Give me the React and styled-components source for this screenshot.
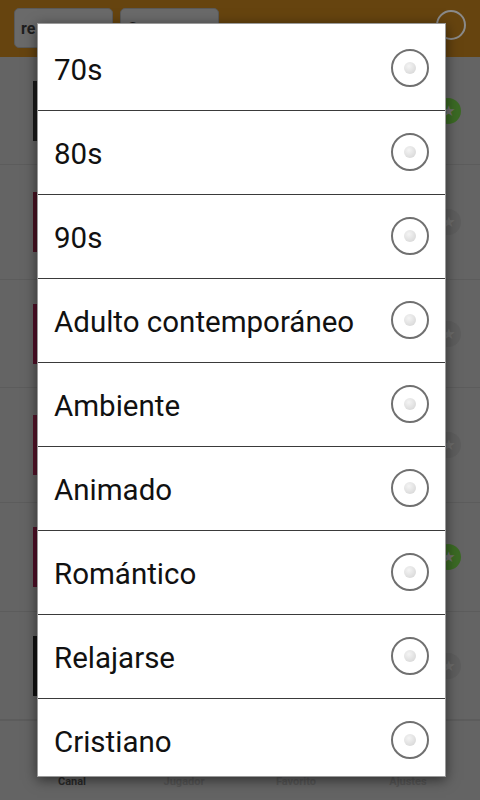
import React, { useState } from 'react';
import styled, { createGlobalStyle } from 'styled-components';

// The page behind the dialog is drawn with colours already dimmed by the modal scrim.
const GlobalStyle = createGlobalStyle`
  html, body {
    margin: 0;
    padding: 0;
    height: 100%;
    overflow: hidden;
    font-family: Roboto, "Noto Sans", sans-serif;
    background: #646464;
  }
  * { box-sizing: border-box; }
`;

const Screen = styled.div`
  position: relative;
  width: 480px;
  height: 800px;
  overflow: hidden;
  background: #646464;
`;

const Page = styled.div`
  display: flex;
  flex-direction: column;
  width: 480px;
  height: 800px;
  background: #646464;
`;

const Header = styled.header`
  display: flex;
  align-items: flex-start;
  gap: 7px;
  height: 57px;
  padding: 8px 14px 0 14px;
  background: #66440f;
`;

const HeaderButton = styled.button`
  width: 99px;
  height: 40px;
  border: 1px solid #5a5a5a;
  border-radius: 5px;
  background: #6a6a6a;
  font-family: Roboto, sans-serif;
  font-weight: bold;
  font-size: 16px;
  text-align: left;
  padding: 0 6px;
  color: #1e1e1e;
`;

const HeaderCircle = styled.div`
  margin-left: auto;
  margin-top: 2px;
  width: 30px;
  height: 30px;
  border-radius: 50%;
  border: 2px solid #8a8a8a;
`;

const StationList = styled.div`
  flex: 1;
  display: flex;
  flex-direction: column;
`;

const Station = styled.div`
  display: flex;
  align-items: center;
  height: ${p => p.$h}px;
  padding: 0 19px 0 33px;
  border-bottom: 1px solid #5c5c5c;
`;

const Thumb = styled.div`
  width: 40px;
  height: 60px;
  background: ${p => p.$color};
`;

const Spacer = styled.div`
  flex: 1;
`;

const StarButton = styled.div`
  width: 26px;
  height: 26px;
  border-radius: 50%;
  background: ${p => (p.$fav ? '#3b6a24' : '#5e5e5e')};
  display: flex;
  align-items: center;
  justify-content: center;
  color: #6e6e6e;
  font-size: 15px;
`;

const BottomNav = styled.nav`
  display: grid;
  grid-template-columns: repeat(4, 1fr);
  height: 80px;
  align-items: end;
  padding: 0 16px 12px 16px;
  background: #646464;
  border-top: 1px solid #5c5c5c;
`;

const NavLabel = styled.span`
  font-size: 11px;
  font-weight: bold;
  text-align: center;
  color: ${p => (p.$active ? '#2a2a2a' : '#565656')};
`;

const DialogLayer = styled.div`
  position: absolute;
  top: 0;
  left: 0;
  width: 100%;
  height: 100%;
  display: flex;
  align-items: flex-start;
  padding: 23px 0 0 37px;
`;

const Dialog = styled.div`
  width: 409px;
  height: 754px;
  padding-top: 3px;
  background: #fff;
  border: 1px solid #9a9a9a;
  box-shadow: 0 3px 12px rgba(0, 0, 0, 0.55);
  overflow: hidden;
`;

const Option = styled.label`
  display: flex;
  align-items: center;
  justify-content: space-between;
  height: 84px;
  padding: 2px 16px 0 16px;
  border-bottom: 1px solid #3a3a3a;
  font-size: 29.5px;
  color: #111;
  cursor: pointer;
`;

const Radio = styled.span`
  width: 38px;
  height: 38px;
  margin-top: -4px;
  border-radius: 50%;
  border: 2px solid #707070;
  display: flex;
  align-items: center;
  justify-content: center;

  &::after {
    content: '';
    width: 12px;
    height: 12px;
    border-radius: 50%;
    background: ${p =>
      p.$checked
        ? '#ffaa26'
        : 'radial-gradient(circle at 40% 35%, #f4f4f4, #d2d2d2)'};
  }
`;

const stations = [
  { h: 108, color: '#1a1a1a', fav: true },
  { h: 115, color: '#4a1222', fav: false },
  { h: 108, color: '#521028', fav: false },
  { h: 115, color: '#56142a', fav: false },
  { h: 109, color: '#521028', fav: true },
  { h: 108, color: '#111', fav: false },
];

const genres = [
  '70s',
  '80s',
  '90s',
  'Adulto contemporáneo',
  'Ambiente',
  'Animado',
  'Romántico',
  'Relajarse',
  'Cristiano',
];

const App = () => {
  const [selected, setSelected] = useState(null);

  return (
    <Screen>
      <GlobalStyle />
      <Page>
        <Header>
          <HeaderButton>re</HeaderButton>
          <HeaderButton>G</HeaderButton>
          <HeaderCircle />
        </Header>
        <StationList>
          {stations.map((s, i) => (
            <Station key={i} $h={s.h}>
              <Thumb $color={s.color} />
              <Spacer />
              <StarButton $fav={s.fav}>★</StarButton>
            </Station>
          ))}
        </StationList>
        <BottomNav>
          <NavLabel $active>Canal</NavLabel>
          <NavLabel>Jugador</NavLabel>
          <NavLabel>Favorito</NavLabel>
          <NavLabel>Ajustes</NavLabel>
        </BottomNav>
      </Page>
      <DialogLayer>
        <Dialog>
          {genres.map(g => (
            <Option key={g} onClick={() => setSelected(g)}>
              {g}
              <Radio $checked={selected === g} />
            </Option>
          ))}
        </Dialog>
      </DialogLayer>
    </Screen>
  );
};

export default App;
